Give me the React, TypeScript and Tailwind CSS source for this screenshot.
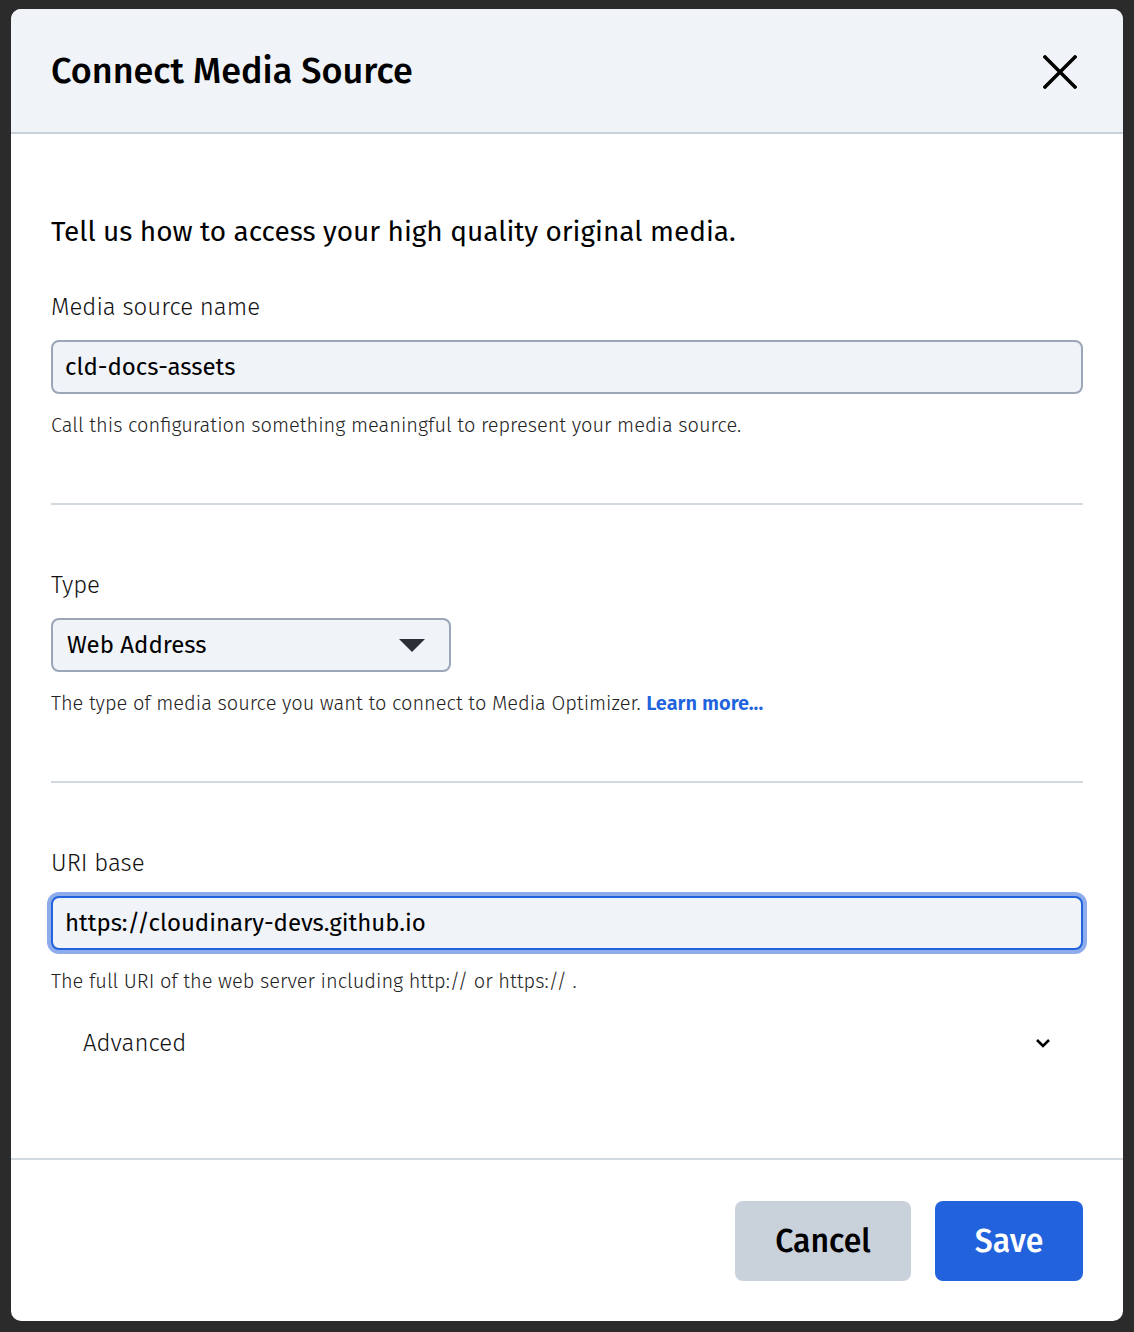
import React from "react";

export default function App() {
  const font = { fontFamily: '"Fira Sans", "Noto Sans", "Open Sans", sans-serif' };
  return (
    <div className="w-[1134px] h-[1332px] bg-[#2b2b2b] pt-[9px] pl-[11px]" style={font}>
      <div className="w-[1112px] h-[1312px] bg-white rounded-[10px] overflow-hidden flex flex-col">
        <div className="h-[125px] shrink-0 bg-[#f0f3f8] border-b-2 border-[#c9d1db] flex items-center justify-between pl-[40px] pr-[46px]">
          <h1 className="text-[36px] leading-[40px] font-medium text-black">Connect Media Source</h1>
          <svg width="34" height="34" viewBox="0 0 34 34" className="mt-[2px]">
            <path d="M2 2 L32 32 M32 2 L2 32" stroke="#000" strokeWidth="3.5" strokeLinecap="square" />
          </svg>
        </div>
        <div className="flex-1 px-[40px] flex flex-col">
          <p className="mt-[80px] text-[28px] leading-[36px] text-black">Tell us how to access your high quality original media.</p>

          <label className="mt-[41px] text-[24px] leading-[32px] font-light text-[#111]">Media source name</label>
          <div className="mt-[17px] h-[54px] rounded-[8px] border-2 border-[#9ba6b8] bg-[#f0f3f8] flex items-center px-[12px] text-[24px] text-black">cld-docs-assets</div>
          <p className="mt-[17px] text-[20px] leading-[28px] font-light text-[#222]">Call this configuration something meaningful to represent your media source.</p>

          <div className="mt-[64px] h-[2px] bg-[#d3d9e1]" />

          <label className="mt-[64px] text-[24px] leading-[32px] font-light text-[#111]">Type</label>
          <div className="mt-[17px] w-[400px] h-[54px] rounded-[8px] border-2 border-[#9ba6b8] bg-[#f0f3f8] flex items-center justify-between pl-[14px] pr-[24px] text-[24px] text-black">
            <span>Web Address</span>
            <svg width="26" height="13" viewBox="0 0 26 13"><path d="M0 0 H26 L13 13 Z" fill="#2b2f36" /></svg>
          </div>
          <p className="mt-[17px] text-[20px] leading-[28px] font-light text-[#222]">
            The type of media source you want to connect to Media Optimizer.{" "}
            <span className="text-[#2063dd] font-semibold">Learn more...</span>
          </p>

          <div className="mt-[64px] h-[2px] bg-[#d3d9e1]" />

          <label className="mt-[64px] text-[24px] leading-[32px] font-light text-[#111]">URI base</label>
          <div className="mt-[17px] h-[54px] rounded-[8px] border-2 border-[#2063dd] bg-[#f0f3f8] flex items-center px-[12px] text-[24px] text-black shadow-[0_0_0_4px_#8eabeb]">https://cloudinary-devs.github.io</div>
          <p className="mt-[17px] text-[20px] leading-[28px] font-light text-[#222]">The full URI of the web server including http:// or https:// .</p>

          <div className="mt-[32px] flex items-center justify-between pl-[32px] pr-[32px]">
            <span className="text-[24px] leading-[32px] font-light text-[#111]">Advanced</span>
            <svg width="16" height="10" viewBox="0 0 16 10"><path d="M2 2 L8 8 L14 2" stroke="#000" strokeWidth="2.6" fill="none" /></svg>
          </div>
        </div>
        <div className="shrink-0 border-t-2 border-[#d3d9e1] h-[163px] flex items-center justify-end gap-[24px] pr-[40px]">
          <button className="w-[176px] h-[80px] rounded-[8px] bg-[#c9d1db] text-[32px] font-medium text-black">Cancel</button>
          <button className="w-[148px] h-[80px] rounded-[8px] bg-[#2263dd] text-[32px] font-medium text-white">Save</button>
        </div>
      </div>
    </div>
  );
}
